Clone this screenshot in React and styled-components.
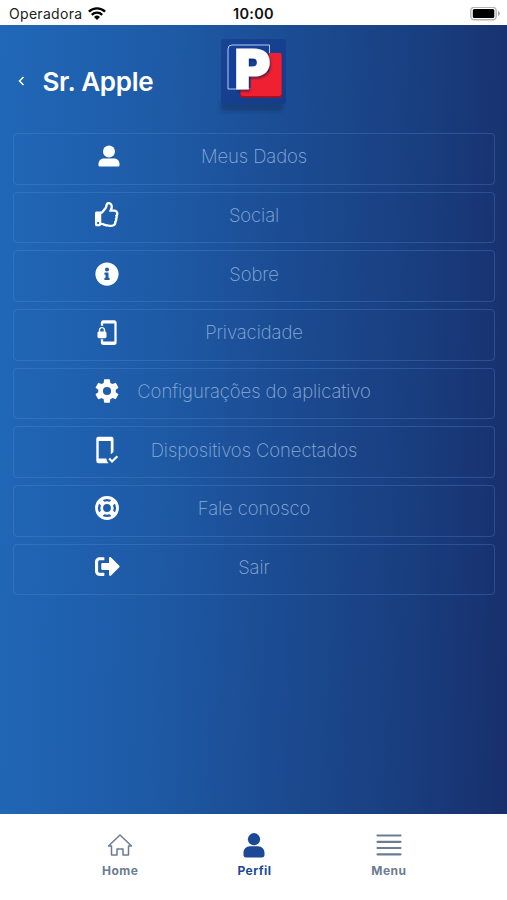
import styled, { createGlobalStyle } from "styled-components";
import { FaRegThumbsUp, FaInfoCircle, FaSignOutAlt } from "react-icons/fa";
import { IoSettingsSharp } from "react-icons/io5";
import { MdPhonelinkLock } from "react-icons/md";

const GlobalStyle = createGlobalStyle`
  * {
    box-sizing: border-box;
  }
  body {
    margin: 0;
    font-family: Inter, "Liberation Sans", sans-serif;
  }
`;

const Screen = styled.div`
  width: 100%;
  height: 100vh;
  display: flex;
  flex-direction: column;
  background-color: white;
  overflow: hidden;
`;

const StatusBar = styled.div`
  height: 25px;
  flex-shrink: 0;
  padding: 2px 6px 0 9px;
  display: grid;
  grid-template-columns: 1fr auto 1fr;
  align-items: center;
  color: #222;
`;

const Carrier = styled.div`
  display: flex;
  align-items: center;
  gap: 6px;
  font-size: 14px;
  letter-spacing: 0.3px;
`;

const Clock = styled.div`
  margin-right: 3px;
  font-size: 14.5px;
  font-weight: 600;
  letter-spacing: 0.3px;
  color: #111;
`;

const Battery = styled.svg`
  justify-self: end;
`;

const Content = styled.main`
  flex: 1;
  background: linear-gradient(92deg, #2068b8 0%, #1e5aa6 32%, #1b4a90 58%, #193e7f 80%, #182f6c 100%);
`;

const Header = styled.header`
  height: 108px;
  padding: 0 13px;
  display: grid;
  grid-template-columns: 1fr 74px 1fr;
`;

const Back = styled.div`
  display: flex;
  align-items: center;
  gap: 16.5px;
  padding: 4px 0 0 5px;
  color: white;
`;

const Title = styled.h1`
  margin: 0;
  font-size: 26px;
  font-weight: 600;
  letter-spacing: -0.3px;
  white-space: nowrap;
`;

const Logo = styled.svg`
  margin-top: 10px;
`;

const LogoLetter = styled.text`
  font-family: "DejaVu Sans", sans-serif;
  font-weight: 700;
  font-size: 51px;
  fill: white;
  stroke: white;
  stroke-width: 3px;
  filter: drop-shadow(1px 2px 1px rgba(12, 30, 80, 0.6));
`;

const List = styled.div`
  display: flex;
  flex-direction: column;
  gap: 7px;
  padding: 0 12px 0 13px;
`;

const Item = styled.div`
  height: 51.67px;
  padding: 0 80px 5px;
  border: 1px solid rgba(90, 145, 215, 0.3);
  border-radius: 4px;
  display: grid;
  grid-template-columns: 28px 1fr 28px;
  align-items: center;
`;

const ItemIcon = styled.span`
  display: flex;
  justify-content: center;
  color: white;
  margin-left: ${(props) => props.$shift}px;
`;

const ItemText = styled.span`
  justify-self: center;
  color: #8aabd8;
  font-size: 18.5px;
  font-weight: 200;
  letter-spacing: -0.08px;
  white-space: nowrap;
`;

const TabBar = styled.nav`
  height: 86px;
  flex-shrink: 0;
  padding: 17px 51px 0 53px;
  display: grid;
  grid-template-columns: repeat(3, 1fr);
`;

const Tab = styled.div`
  display: flex;
  flex-direction: column;
  align-items: center;
  gap: 4px;
  color: ${(props) => (props.$active ? "#1b4996" : "#6b7c93")};
  font-size: 12px;
  line-height: 16px;
  font-weight: 700;
  letter-spacing: 0.45px;
`;

const Person = () => (
  <svg width="22" height="22" viewBox="0 0 22 22" fill="currentColor">
    <circle cx="11" cy="6.500" r="6" />
    <path d="M6.500 13.500h9c3.600 0 6 2 6 5.500v1.200c0 .9-.5 1.300-1.400 1.300H1.900c-.9 0-1.400-.4-1.400-1.300V19c0-3.500 2.400-5.500 6-5.500z" />
  </svg>
);

const PersonTab = () => (
  <svg width="22" height="28" viewBox="0 0 22 28" fill="currentColor">
    <circle cx="11" cy="8.200" r="6.100" />
    <path d="M7 15.200h8c4 0 6.500 3 6.500 6.600v2.200c0 1.600-.9 2.500-2.500 2.500H3C1.400 26.500.5 25.600.5 24v-2.200c0-3.600 2.500-6.600 6.500-6.600z" />
  </svg>
);

const PhoneCheck = () => (
  <svg width="24" height="28" viewBox="0 0 24 28">
    <path
      fill="currentColor"
      fillRule="evenodd"
      d="M3.500.8h13a2 2 0 0 1 2 2V16l-2.700 2.200V5H3.700v17.500h7.600c.3 1.700 1 3.300 2.100 4.700H3.500a2.200 2.200 0 0 1-2.200-2.200V3c0-1.300.9-2.200 2.200-2.200z"
    />
    <path d="M14.200 22.600l2.800 2.900 5.400-5.300" fill="none" stroke="currentColor" strokeWidth="2.200" />
  </svg>
);

const Lifebuoy = () => (
  <svg width="24" height="24" viewBox="0 0 24 24" fill="none" stroke="currentColor">
    <circle cx="12" cy="12" r="10.500" strokeWidth="2.800" />
    <circle cx="12" cy="12" r="5.300" strokeWidth="2.800" />
    <path d="M4.800 4.800l3.800 3.800M19.200 4.800l-3.800 3.800M4.800 19.200l3.800-3.800M19.200 19.200l-3.800-3.800" strokeWidth="5" />
  </svg>
);

const items = [
  { text: "Meus Dados", icon: <Person />, shift: 2 },
  { text: "Social", icon: <FaRegThumbsUp size={25} />, shift: -2 },
  { text: "Sobre", icon: <FaInfoCircle size={24} />, shift: -2 },
  { text: "Privacidade", icon: <MdPhonelinkLock size={27} />, shift: -4 },
  { text: "Configurações do aplicativo", icon: <IoSettingsSharp size={26} />, shift: -2 },
  { text: "Dispositivos Conectados", icon: <PhoneCheck />, shift: -2 },
  { text: "Fale conosco", icon: <Lifebuoy />, shift: -2 },
  { text: "Sair", icon: <FaSignOutAlt size={25} />, shift: -2 },
];

const App = () => {
  return (
    <>
      <GlobalStyle />
      <Screen>
        <StatusBar>
          <Carrier>
            Operadora
            <svg width="18" height="14" viewBox="0 0 18 14" fill="none" stroke="#000" strokeWidth="2.400">
              <path d="M.9 4.700a11.500 11.500 0 0 1 16.200 0" />
              <path d="M3.800 7.800a7.400 7.400 0 0 1 10.400 0" />
              <path d="M9 13l-3-3.100a4.300 4.300 0 0 1 6 0z" fill="#000" stroke="none" />
            </svg>
          </Carrier>
          <Clock>10:00</Clock>
          <Battery width="31" height="14" viewBox="0 0 31 14">
            <rect x=".8" y=".3" width="25.400" height="12.400" rx="3.500" fill="#fff" stroke="#b5b5b5" strokeWidth="1.400" />
            <rect x="2.800" y="2" width="21.500" height="9" rx="1.500" fill="#000" />
            <path d="M28 4c2.600 1 2.600 4 0 5z" fill="#aaa" />
          </Battery>
        </StatusBar>
        <Content>
          <Header>
            <Back>
              <svg width="8" height="10" viewBox="0 0 8 10" fill="none" stroke="currentColor" strokeWidth="1.500">
                <path d="M5.500 1L1.500 5l4 4" />
              </svg>
              <Title>Sr. Apple</Title>
            </Back>
            <Logo width="74" height="84" viewBox="0 0 74 84">
              <defs>
                <linearGradient id="tile" x1="0" y1="0" x2="1" y2="1">
                  <stop offset="0" stopColor="#174496" />
                  <stop offset="1" stopColor="#143c88" />
                </linearGradient>
                <filter id="soft" x="-20%" y="-60%" width="140%" height="220%">
                  <feGaussianBlur stdDeviation="2" />
                </filter>
              </defs>
              <rect x="4" y="66" width="62" height="10" fill="#123a70" opacity=".75" filter="url(#soft)" />
              <rect x="4" y="4" width="65" height="65" rx="3" fill="url(#tile)" />
              <rect x="23" y="19" width="42" height="44" rx="3" fill="#a51228" />
              <rect x="23.500" y="18" width="41" height="43" rx="3" fill="#ee2032" />
              <path d="M11 54V14q0-4 4-4h37.500v44z" fill="#15409a" stroke="#b8cced" strokeWidth="1" />
              <path d="M52 18h12v41H24.500v-5h9V37H52z" fill="#ee2032" />
              <LogoLetter x="16" y="53">P</LogoLetter>
            </Logo>
          </Header>
          <List>
            {items.map((item) => (
              <Item key={item.text}>
                <ItemIcon $shift={item.shift}>{item.icon}</ItemIcon>
                <ItemText>{item.text}</ItemText>
              </Item>
            ))}
          </List>
        </Content>
        <TabBar>
          <Tab>
            <svg width="26" height="28" viewBox="0 0 26 28" fill="none" stroke="currentColor" strokeWidth="1.500" strokeLinejoin="round">
              <path d="M13 4L1.500 15h3v9H10v-6h6v6h5.500v-9h3z" />
            </svg>
            Home
          </Tab>
          <Tab $active>
            <PersonTab />
            Perfil
          </Tab>
          <Tab>
            <svg width="26" height="28" viewBox="0 0 26 28" fill="none" stroke="currentColor" strokeWidth="2.200" strokeLinecap="round">
              <path d="M1.500 4.500h23M1.500 10.800h23M1.500 17h23M1.500 23.300h23" />
            </svg>
            Menu
          </Tab>
        </TabBar>
      </Screen>
    </>
  );
};

export default App;
